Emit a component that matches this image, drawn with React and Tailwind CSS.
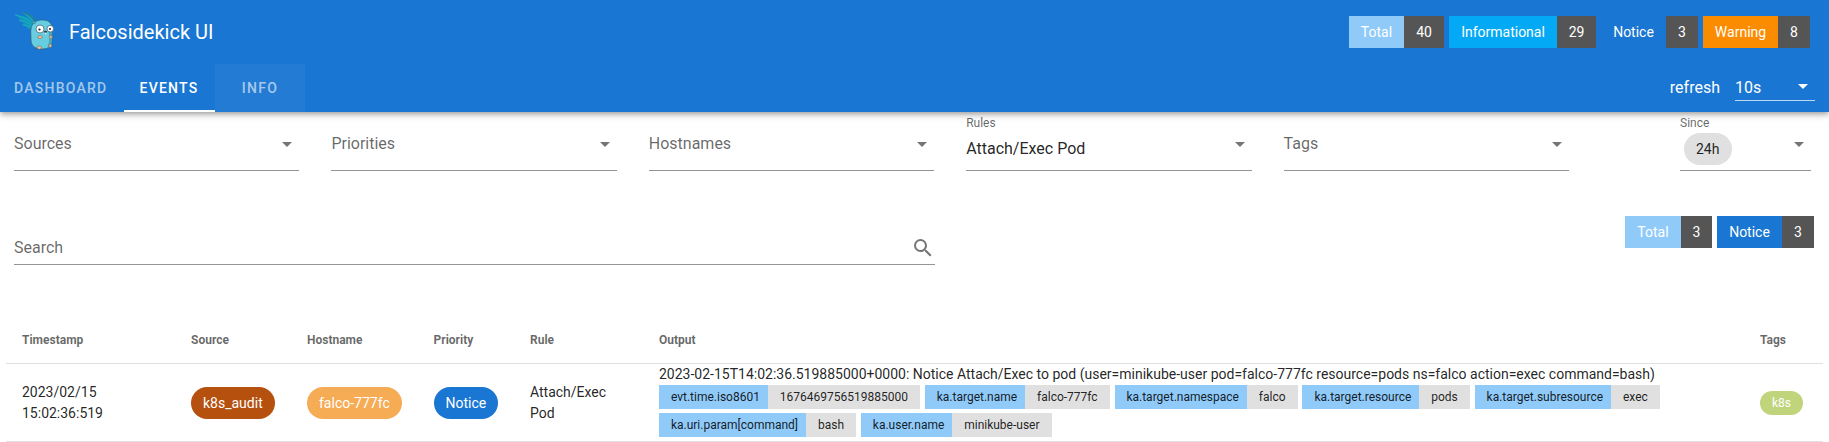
import React from 'react';

const severityTotals = [
  { label: 'Total', count: 40, color: 'bg-[#90caf9]', labelWidth: 'w-[55px]', countWidth: 'w-10' },
  { label: 'Informational', count: 29, color: 'bg-[#03a9f4]', labelWidth: 'w-[108px]', countWidth: 'w-[39px]' },
  { label: 'Notice', count: 3, color: 'bg-[#1976d2]', labelWidth: 'w-[65px]', countWidth: 'w-8' },
  { label: 'Warning', count: 8, color: 'bg-[#fb8c00]', labelWidth: 'w-[75px]', countWidth: 'w-8' },
];

const filteredTotals = [
  { label: 'Total', count: 3, color: 'bg-[#90caf9]', labelWidth: 'w-14', countWidth: 'w-[31px]' },
  { label: 'Notice', count: 3, color: 'bg-[#1976d2]', labelWidth: 'w-[65px]', countWidth: 'w-8' },
];

const outputFields = [
  [
    { name: 'evt.time.iso8601', value: '1676469756519885000' },
    { name: 'ka.target.name', value: 'falco-777fc' },
    { name: 'ka.target.namespace', value: 'falco' },
    { name: 'ka.target.resource', value: 'pods' },
    { name: 'ka.target.subresource', value: 'exec' },
  ],
  [
    { name: 'ka.uri.param[command]', value: 'bash' },
    { name: 'ka.user.name', value: 'minikube-user' },
  ],
];

const columns = 'grid grid-cols-[169px_116px_126.5px_96.5px_129px_1101px_1fr] pl-4';

function Logo() {
  return (
    <svg className="h-[42px] w-[42px] shrink-0" viewBox="0 0 42 42">
      <path d="M0 3c5 2 10 1 14 4l-7-7c5 3 10 2 13 7 2 3 2 6 1 9l-3 3-6-2 1-1-6-3 3-.5-6-3.500 3-.5z" fill="#1496b8" />
      <path d="M1 3.500c6 3 12 3 18 10M8 1c5 3 9 4 12 12M5 9c5 1 9 2 13 6M9 14c4 0 6 1 9 3" fill="none" stroke="#14b5cf" strokeWidth="1" />
      <path d="M8.500 .8c5 2.500 9 2.500 12 9" fill="none" stroke="#247d99" strokeWidth="1.600" />
      <path d="M17 18c1-7 6-9 11.500-9 6 0 9.500 3 9.500 8 0 6 1 10-.5 16-1 4-5 5-10 5-6 0-10.500-3-10.500-9 0-5-.5-8 0-11z" fill="#67cde0" stroke="#315e79" strokeWidth=".7" />
      <path d="M34.500 20c1 8 1 12-1.500 17 3-.5 4-2 4.500-5 1-5 .5-8 .5-13z" fill="#45a7bd" />
      <circle cx="20" cy="11.500" r="1.400" fill="#55b6ca" stroke="#315e79" strokeWidth=".5" />
      <circle cx="26" cy="18" r="4" fill="#fff" stroke="#36566d" strokeWidth=".7" />
      <circle cx="36.300" cy="17.700" r="3.300" fill="#fff" stroke="#36566d" strokeWidth=".7" />
      <circle cx="25.500" cy="18.500" r="1.100" fill="#17202a" />
      <circle cx="36" cy="18" r="1" fill="#17202a" />
      <ellipse cx="31.500" cy="20.800" rx="1.600" ry="1" fill="#3a3434" />
      <rect x="30.700" y="21.800" width="1.600" height="1.500" fill="#f4e9e0" />
      <ellipse cx="26" cy="26" rx="2.500" ry="1.500" fill="#e9bd9c" stroke="#6d6258" strokeWidth=".5" />
      <ellipse cx="36.700" cy="26" rx="1.600" ry="1.500" fill="#e9bd9c" stroke="#6d6258" strokeWidth=".5" />
      <ellipse cx="25.300" cy="36.600" rx="2.300" ry="1.700" fill="#e9bd9c" stroke="#6d6258" strokeWidth=".5" />
      <ellipse cx="36.300" cy="34.700" rx="1.400" ry="1.800" fill="#e9bd9c" stroke="#6d6258" strokeWidth=".5" />
    </svg>
  );
}

function MenuDown({ className = '' }) {
  return (
    <svg className={`h-6 w-6 shrink-0 ${className}`} viewBox="0 0 24 24" fill="currentColor">
      <path d="M7,10L12,15L17,10H7Z" />
    </svg>
  );
}

function Magnify() {
  return (
    <svg className="h-6 w-6 shrink-0 text-black/54" viewBox="0 0 24 24" fill="currentColor">
      <path d="M9.5,3A6.5,6.5 0 0,1 16,9.5C16,11.11 15.41,12.59 14.44,13.73L14.71,14H15.5L20.5,19L19,20.5L14,15.5V14.71L13.73,14.44C12.59,15.41 11.11,16 9.5,16A6.5,6.5 0 0,1 3,9.5A6.5,6.5 0 0,1 9.5,3M9.5,5C7,5 5,7 5,9.5C5,12 7,14 9.5,14C12,14 14,12 14,9.5C14,7 12,5 9.5,5Z" />
    </svg>
  );
}

function CountBadges({ items }) {
  return (
    <div className="flex gap-[5px] text-sm leading-8 text-white">
      {items.map((item) => (
        <div key={item.label} className="flex h-8 text-center">
          <span className={`${item.color} ${item.labelWidth}`}>{item.label}</span>
          <span className={`bg-[#555555] ${item.countWidth}`}>{item.count}</span>
        </div>
      ))}
    </div>
  );
}

function Filter({ label, value, className = '' }) {
  return (
    <div className={`flex h-[59px] justify-between border-b border-[#949494] text-black/60 ${className}`}>
      {value ? (
        <div className="flex flex-col">
          <span className="h-[21px] pt-px text-xs leading-5">{label}</span>
          {value}
        </div>
      ) : (
        <span className="pt-5 text-base leading-6">{label}</span>
      )}
      <MenuDown className="mt-5 text-black/54" />
    </div>
  );
}

function Chip({ color, children }) {
  return <span className={`inline-block h-8 rounded-full px-3 text-sm leading-8 text-white ${color}`}>{children}</span>;
}

export default function App() {
  return (
    <div className="h-[442px] w-[1829px] overflow-hidden bg-white font-['Roboto',sans-serif] text-black/87">
      <header className="relative h-28 bg-[#1976d2] text-white shadow-[0_2px_4px_-1px_rgba(0,0,0,0.2),0_4px_5px_0_rgba(0,0,0,0.14),0_1px_10px_0_rgba(0,0,0,0.12)]">
        <div className="flex h-16 items-center justify-between pr-[19px] pl-[14px]">
          <div className="flex items-center gap-[13px]">
            <Logo />
            <h1 className="text-xl leading-8">Falcosidekick UI</h1>
          </div>
          <CountBadges items={severityTotals} />
        </div>
        <div className="flex h-12 justify-between pr-[14px]">
          <nav className="flex text-sm leading-[48px] font-medium tracking-[0.0892857em] text-white/60">
            <span className="w-[124px] pl-[14px]">DASHBOARD</span>
            <span className="h-12 w-[91px] border-b-2 border-white pl-[15.5px] text-white">EVENTS</span>
            <span className="w-[90px] bg-[#247bd4] text-center">INFO</span>
          </nav>
          <div className="flex gap-[15px]">
            <span className="leading-[48px]">refresh</span>
            <div className="flex h-[37px] w-20 justify-between border-b border-white/70">
              <span className="leading-[48px]">10s</span>
              <MenuDown className="mt-[10px]" />
            </div>
          </div>
        </div>
      </header>

      <div className="flex justify-between pr-[18px] pl-[14px]">
        <div className="flex gap-8">
          <Filter className="w-[285.4px]" label="Sources" />
          <Filter className="w-[285.4px]" label="Priorities" />
          <Filter className="w-[285.4px]" label="Hostnames" />
          <Filter
            className="w-[285.4px]"
            label="Rules"
            value={<span className="text-base leading-[31px] text-black/87">Attach/Exec Pod</span>}
          />
          <Filter className="w-[285.4px]" label="Tags" />
        </div>
        <Filter
          className="w-[131px]"
          label="Since"
          value={
            <span className="ml-1 h-8 w-12 rounded-full bg-[#e0e0e0] px-3 text-sm leading-8 text-black/87">24h</span>
          }
        />
      </div>

      <div className="flex h-[94px] justify-between pr-[15px] pl-[14px]">
        <div className="flex h-[94px] w-[921px] justify-between border-b border-[#949494] pt-[65px] text-black/60">
          <span className="text-base leading-6">Search</span>
          <Magnify />
        </div>
        <div className="pt-[45px]">
          <CountBadges items={filteredTotals} />
        </div>
      </div>

      <section className="mx-1.5 mt-[51px]">
        <div className={`${columns} h-12 border-b border-black/12 text-xs leading-[48px] font-bold text-black/60`}>
          <span>Timestamp</span>
          <span>Source</span>
          <span>Hostname</span>
          <span>Priority</span>
          <span>Rule</span>
          <span>Output</span>
          <span>Tags</span>
        </div>
        <div className={`${columns} h-[78px] items-center border-b border-black/12 text-sm leading-[21px]`}>
          <span className="w-[100px]">2023/02/15 15:02:36:519</span>
          <span className="flex"><Chip color="bg-[#b5500f]">k8s_audit</Chip></span>
          <span className="flex"><Chip color="bg-[#f6ab55]">falco-777fc</Chip></span>
          <span className="flex"><Chip color="bg-[#1976d2]">Notice</Chip></span>
          <span className="w-20">Attach/Exec Pod</span>
          <div className="self-start">
            <p>
              2023-02-15T14:02:36.519885000+0000: Notice Attach/Exec to pod (user=minikube-user pod=falco-777fc
              resource=pods ns=falco action=exec command=bash)
            </p>
            <div className="flex flex-col gap-1 text-xs leading-6">
              {outputFields.map((row, index) => (
                <div key={index} className="flex gap-[4.9px]">
                  {row.map((field) => (
                    <div key={field.name} className="flex h-6">
                      <span className="bg-[#90caf9] pr-[7.9px] pl-[11.9px]">{field.name}</span>
                      <span className="bg-[#e0e0e0] px-3">{field.value}</span>
                    </div>
                  ))}
                </div>
              ))}
            </div>
          </div>
          <span className="flex">
            <span className="h-6 rounded-full bg-[#c0d47b] px-3 text-xs leading-6 text-white">k8s</span>
          </span>
        </div>
      </section>
    </div>
  );
}
